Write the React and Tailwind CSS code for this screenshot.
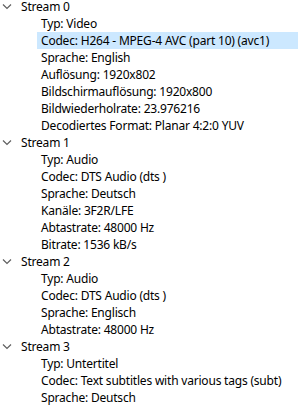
import React from 'react';

const streams = [
  {
    name: 'Stream 0',
    items: [
      'Typ: Video',
      'Codec: H264 - MPEG-4 AVC (part 10) (avc1)',
      'Sprache: English',
      'Auflösung: 1920x802',
      'Bildschirmauflösung: 1920x800',
      'Bildwiederholrate: 23.976216',
      'Decodiertes Format: Planar 4:2:0 YUV',
    ],
  },
  {
    name: 'Stream 1',
    items: [
      'Typ: Audio',
      'Codec: DTS Audio (dts )',
      'Sprache: Deutsch',
      'Kanäle: 3F2R/LFE',
      'Abtastrate: 48000 Hz',
      'Bitrate: 1536 kB/s',
    ],
  },
  {
    name: 'Stream 2',
    items: ['Typ: Audio', 'Codec: DTS Audio (dts )', 'Sprache: Englisch', 'Abtastrate: 48000 Hz'],
  },
  {
    name: 'Stream 3',
    items: ['Typ: Untertitel', 'Codec: Text subtitles with various tags (subt)', 'Sprache: Deutsch'],
  },
];

// the selected row in the tree
const selected = 'Stream 0/1';

const Chevron = () => (
  <svg width="10" height="6" viewBox="0 0 10 6" className="ml-[2px]">
    <path d="M1 0.5 L5 4.5 L9 0.5" fill="none" stroke="#5f5f5f" strokeWidth="1.2" />
  </svg>
);

export default function App() {
  return (
    <div className="w-[298px] h-[419px] overflow-hidden bg-white text-black text-[12px] tracking-[-0.2px] font-['Noto_Sans',sans-serif]">
      <div className="-mt-[2px] flex flex-col">
        {streams.map(stream => (
          <div key={stream.name} className="flex flex-col">
            <div className="h-[17px] flex items-center">
              <div className="w-[21px] flex items-center">
                <Chevron />
              </div>
              <span className="leading-none">{stream.name}</span>
            </div>
            {stream.items.map((item, i) => (
              <div key={item} className="h-[17px] flex pl-[37px]">
                <div
                  className={`flex-1 flex items-center pl-[4px] whitespace-nowrap ${
                    selected === `${stream.name}/${i}` ? 'bg-[#cce8ff]' : ''
                  }`}
                >
                  <span className="leading-none">{item}</span>
                </div>
              </div>
            ))}
          </div>
        ))}
      </div>
    </div>
  );
}
